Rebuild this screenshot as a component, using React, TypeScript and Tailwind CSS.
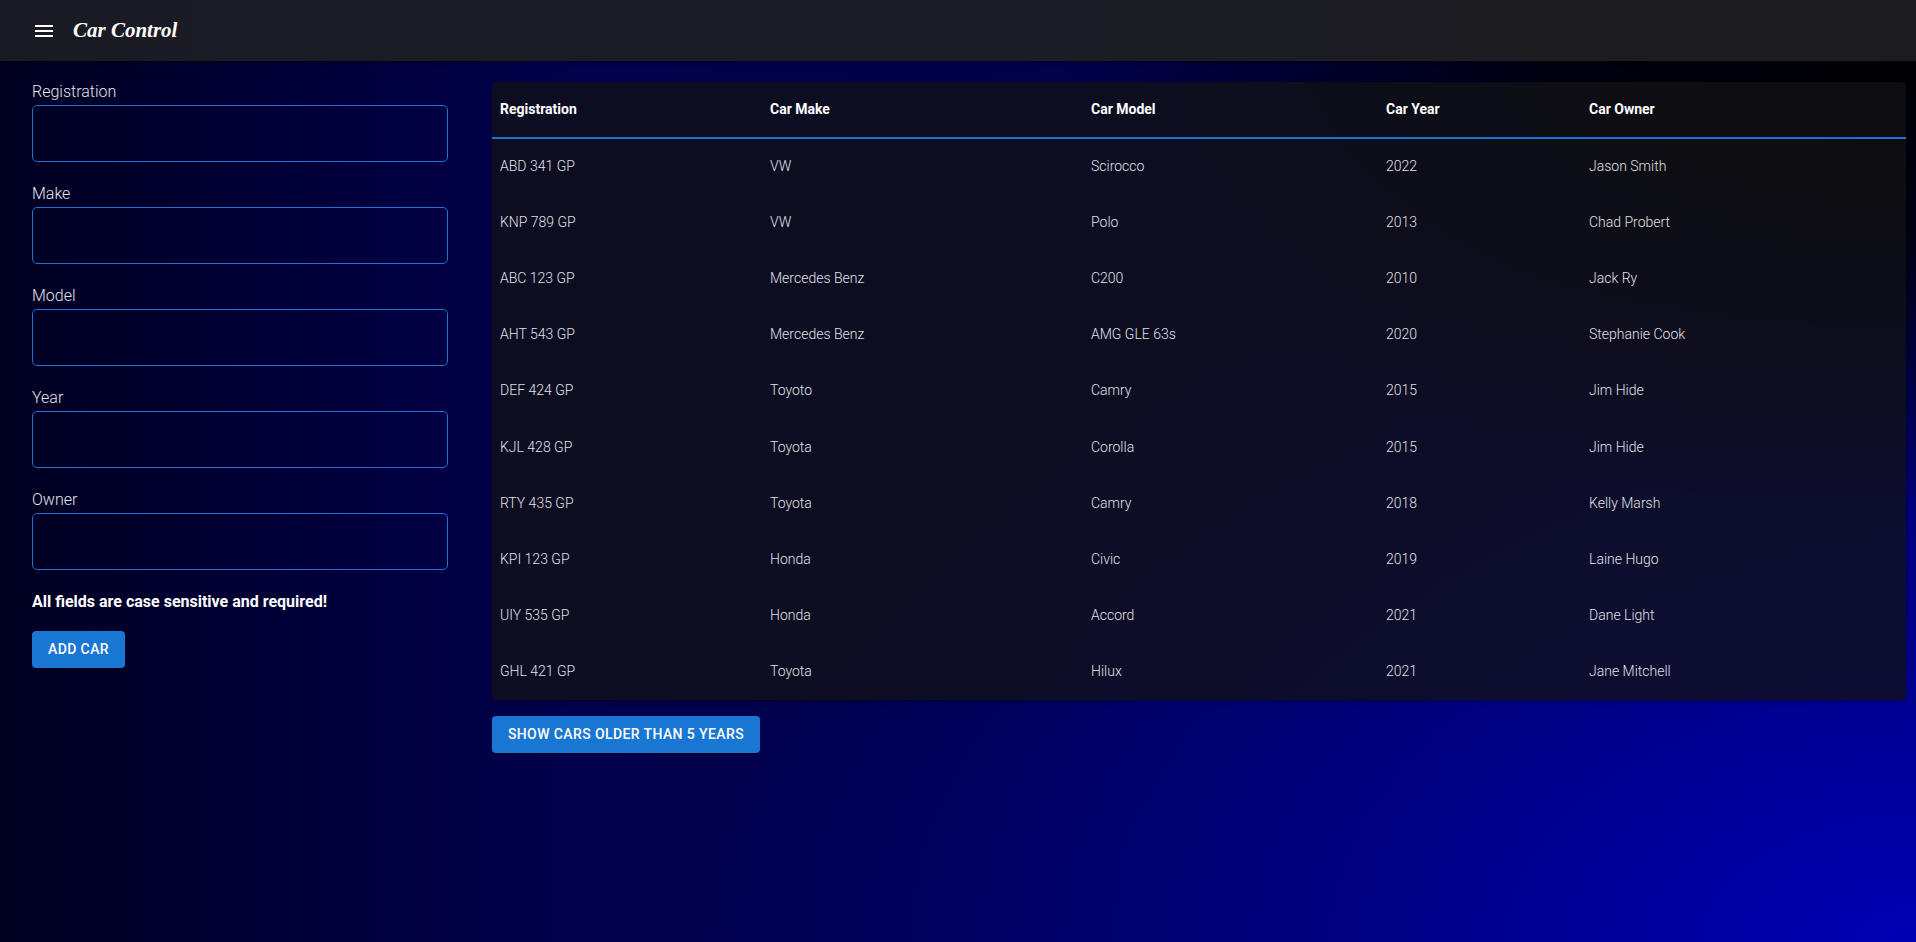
const cars = [
  { reg: "ABD 341 GP", make: "VW", model: "Scirocco", year: 2022, owner: "Jason Smith" },
  { reg: "KNP 789 GP", make: "VW", model: "Polo", year: 2013, owner: "Chad Probert" },
  { reg: "ABC 123 GP", make: "Mercedes Benz", model: "C200", year: 2010, owner: "Jack Ry" },
  { reg: "AHT 543 GP", make: "Mercedes Benz", model: "AMG GLE 63s", year: 2020, owner: "Stephanie Cook" },
  { reg: "DEF 424 GP", make: "Toyoto", model: "Camry", year: 2015, owner: "Jim Hide" },
  { reg: "KJL 428 GP", make: "Toyota", model: "Corolla", year: 2015, owner: "Jim Hide" },
  { reg: "RTY 435 GP", make: "Toyota", model: "Camry", year: 2018, owner: "Kelly Marsh" },
  { reg: "KPI 123 GP", make: "Honda", model: "Civic", year: 2019, owner: "Laine Hugo" },
  { reg: "UIY 535 GP", make: "Honda", model: "Accord", year: 2021, owner: "Dane Light" },
  { reg: "GHL 421 GP", make: "Toyota", model: "Hilux", year: 2021, owner: "Jane Mitchell" },
];

const fields = ["Registration", "Make", "Model", "Year", "Owner"];

function MenuIcon() {
  return (
    <svg viewBox="0 0 24 24" className="h-[24px] w-[24px] fill-white">
      <path d="M3 18h18v-2H3v2zm0-5h18v-2H3v2zm0-7v2h18V6H3z" />
    </svg>
  );
}

function Field({ label }: { label: string }) {
  return (
    <div className="flex flex-col">
      <label className="text-[16px] leading-[24px] font-light text-[#e4e4e8]">{label}</label>
      <input
        className="mt-px h-[57px] w-full rounded-[5px] border border-[#2371d0] bg-transparent px-3 text-white outline-none"
        type="text"
      />
    </div>
  );
}

export default function App() {
  return (
    <div className="min-h-[942px] font-['Roboto','Liberation_Sans',sans-serif] bg-[#000030] bg-[radial-gradient(ellipse_45%_55%_at_100%_0%,#000000_0%,rgba(0,0,5,0.85)_45%,transparent_100%),radial-gradient(ellipse_65%_75%_at_100%_100%,#0000b4_0%,rgba(0,0,170,0.55)_45%,transparent_100%),linear-gradient(90deg,#000020_0%,#000038_15%,#00004c_30%,#00004a_50%,#000050_70%,#000060_100%)]">
      {/* App bar */}
      <header className="flex h-[61px] items-center bg-[linear-gradient(90deg,#1a1a22,#1c1c26_40%,#1c1c1f)] pl-[32px] shadow-[0_2px_4px_rgba(0,0,0,0.4)]">
        <MenuIcon />
        <span className="ml-[17px] font-['Liberation_Serif',serif] text-[21px] font-bold italic text-white">
          Car Control
        </span>
      </header>

      <div className="flex pl-[32px] pr-[10px]">
        {/* Form */}
        <div className="mt-[19px] flex w-[416px] shrink-0 flex-col">
          <div className="flex flex-col gap-[20px]">
            {fields.map((f) => (
              <Field key={f} label={f} />
            ))}
          </div>
          <p className="mt-[20px] text-[16px] leading-[24px] font-bold text-white">
            All fields are case sensitive and required!
          </p>
          <button className="mt-[17px] h-[37px] w-[93px] rounded-[4px] bg-[#1976d2] text-[14px] font-medium tracking-[0.4px] text-white shadow-[0_2px_2px_rgba(0,0,0,0.3)]">
            ADD CAR
          </button>
        </div>

        {/* Table */}
        <div className="ml-[44px] mt-[21px] flex flex-1 flex-col items-start">
          <div className="w-full rounded-[4px] bg-[rgba(18,18,20,0.75)] shadow-[0_2px_4px_rgba(0,0,0,0.3)]">
            <table className="w-full table-fixed border-collapse text-left text-[14px]">
              <thead>
                <tr className="h-[56px] border-b-2 border-[#1976d2]">
                  <th className="w-[270px] pl-[8px] font-bold text-white">Registration</th>
                  <th className="w-[321px] pl-[8px] font-bold text-white">Car Make</th>
                  <th className="w-[295px] pl-[8px] font-bold text-white">Car Model</th>
                  <th className="w-[203px] pl-[8px] font-bold text-white">Car Year</th>
                  <th className="pl-[8px] font-bold text-white">Car Owner</th>
                </tr>
              </thead>
              <tbody>
                {cars.map((c) => (
                  <tr key={c.reg} className="h-[56.2px] font-light text-[#e0e0e6]">
                    <td className="pl-[8px]">{c.reg}</td>
                    <td className="pl-[8px]">{c.make}</td>
                    <td className="pl-[8px]">{c.model}</td>
                    <td className="pl-[8px]">{c.year}</td>
                    <td className="pl-[8px]">{c.owner}</td>
                  </tr>
                ))}
              </tbody>
            </table>
          </div>
          <button className="mt-[16px] h-[37px] w-[268px] rounded-[4px] bg-[#1976d2] text-[14px] font-medium tracking-[0.4px] text-white shadow-[0_2px_2px_rgba(0,0,0,0.3)]">
            SHOW CARS OLDER THAN 5 YEARS
          </button>
        </div>
      </div>
    </div>
  );
}
